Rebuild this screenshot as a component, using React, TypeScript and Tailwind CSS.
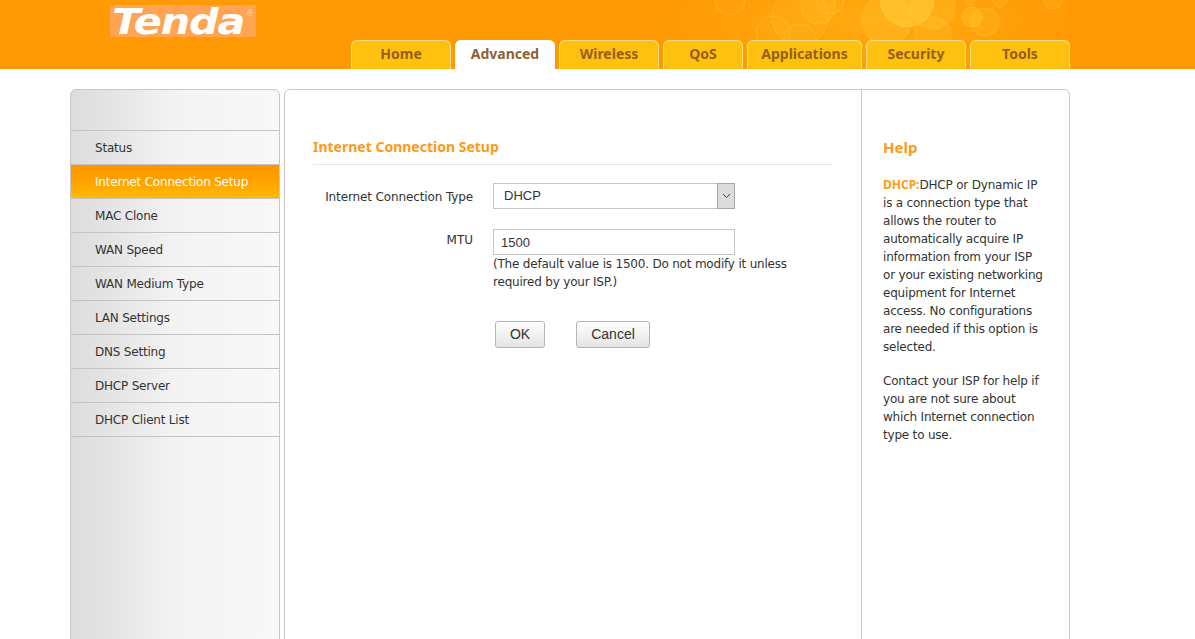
import React from 'react';

const tabs = [
  { label: 'Home', width: 'w-[100px]' },
  { label: 'Advanced', width: 'w-[100px]', active: true },
  { label: 'Wireless', width: 'w-[100px]' },
  { label: 'QoS', width: 'w-[80px]' },
  { label: 'Applications', width: 'w-[115px]' },
  { label: 'Security', width: 'w-[100px]' },
  { label: 'Tools', width: 'w-[100px]' },
];

const menu = [
  'Status',
  'Internet Connection Setup',
  'MAC Clone',
  'WAN Speed',
  'WAN Medium Type',
  'LAN Settings',
  'DNS Setting',
  'DHCP Server',
  'DHCP Client List',
];

// cx, cy, r, fill opacity
const bubbles = [
  [730, 0, 15, 0.06], [773, 33, 17, 0.08], [800, 17, 28, 0.1], [818, 7, 17, 0.14], [800, 40, 16, 0.06],
  [830, 0, 14, 0.1], [887, 20, 25, 0.22], [907, 0, 27, 0.5], [933, 7, 22, 0.2], [933, 35, 18, 0.16],
  [972, 17, 10, 0.3], [985, 22, 14, 0.14], [970, 0, 5, 0.15], [1000, 0, 7, 0.12], [1053, 0, 9, 0.12],
];

const Bubbles = () => (
  <svg className="absolute inset-0 pointer-events-none" width="1195" height="69" viewBox="0 0 1195 69">
    <defs>
      <radialGradient id="glow">
        <stop offset="0" stopColor="#ffb518" stopOpacity="0.6" />
        <stop offset="1" stopColor="#ffb518" stopOpacity="0" />
      </radialGradient>
    </defs>
    <ellipse cx="870" cy="20" rx="210" ry="60" fill="url(#glow)" />
    {bubbles.map(([cx, cy, r, o], i) => (
      <circle key={i} cx={cx} cy={cy} r={r} fill="#ffd23c" fillOpacity={o} stroke="#ffdf70" strokeOpacity="0.25" />
    ))}
  </svg>
);

export default function App() {
  return (
    <div className="h-[639px] overflow-hidden bg-white font-['DejaVu_Sans',sans-serif] text-[12px] tracking-[-0.2px] text-[#333]">
      <header className="relative h-[69px] bg-[#ff9a05]">
        <Bubbles />
        <div className="absolute left-[110px] top-[5px] flex h-[32px] w-[146px] items-center bg-[#ffa452] pl-[2px]">
          <span className="origin-left translate-y-[1px] scale-x-[1.15] font-['DejaVu_Sans',sans-serif] text-[36px] leading-none font-bold tracking-[-1px] text-white italic">
            Tenda
          </span>
          <span className="absolute top-[5px] right-[2px] text-[8px] leading-none tracking-normal text-[#ffd9b0]">®</span>
        </div>
        <nav className="relative flex h-full items-end gap-[4px] pl-[351px]">
          {tabs.map(tab => (
            <a
              key={tab.label}
              className={`flex h-[29px] items-center justify-center rounded-t-[6px] border-x border-t pb-[3px] font-['Noto_Sans',sans-serif] text-[14px] font-bold tracking-normal ${tab.width} ${
                tab.active
                  ? 'border-white bg-white text-[#8f5f36]'
                  : 'border-[#ffdf80] bg-[#fec110] text-[#96601a]'
              }`}
            >
              {tab.label}
            </a>
          ))}
        </nav>
      </header>

      <div className="flex h-[570px] gap-[4px] pt-[20px] pl-[70px]">
        <aside className="h-[600px] w-[210px] overflow-hidden rounded-t-[6px] border border-[#c8c8c8] bg-linear-to-r from-[#dcdcdc] via-[#f3f3f3] to-[#f8f8f8]">
          <div className="h-[40px]" />
          <ul className="border-t border-[#c4c4c4]">
            {menu.map(item => (
              <li
                key={item}
                className={`flex h-[34px] items-center border-b pl-[24px] ${
                  item === 'Internet Connection Setup'
                    ? 'border-[#c4c4c4] bg-linear-to-b from-[#ff9500] via-[#ffa200] to-[#ffbb00] text-white'
                    : 'border-[#c4c4c4] text-[#333]'
                }`}
              >
                {item}
              </li>
            ))}
          </ul>
        </aside>

        <main className="flex h-[600px] w-[786px] overflow-hidden rounded-t-[6px] border border-[#c8c8c8]">
          <section className="w-[576px] pt-[46px] pr-[28px] pl-[28px]">
            <h1 className="h-[29px] border-b border-[#e6e6e6] font-['Noto_Sans',sans-serif] text-[14px] leading-[22px] font-bold tracking-normal text-[#ff9a14]">
              Internet Connection Setup
            </h1>

            <div className="mt-[18px] flex">
              <label className="w-[160px] pt-[7px] text-right leading-[15px] tracking-[-0.12px] whitespace-nowrap">Internet Connection Type</label>
              <div className="relative ml-[20px] h-[26px] w-[242px]">
                <select className="h-full w-full appearance-none border border-[#c4c4c4] bg-white pl-[10px] font-['Liberation_Sans',sans-serif] text-[13px] tracking-normal text-[#333]">
                  <option>DHCP</option>
                </select>
                <span className="absolute top-0 right-0 flex h-[26px] w-[18px] items-center justify-center border border-[#a8a8a8] bg-[#dcdcdc]">
                  <svg width="9" height="6" viewBox="0 0 9 6" fill="none" stroke="#444" strokeWidth="1">
                    <path d="M1 1l3.5 3.5L8 1" />
                  </svg>
                </span>
              </div>
            </div>

            <div className="mt-[20px] flex">
              <label className="w-[160px] pt-[4px] text-right leading-[15px] font-medium tracking-normal">MTU</label>
              <div className="ml-[20px] w-[320px]">
                <input
                  readOnly
                  value="1500"
                  className="h-[26px] w-[242px] border border-[#c4c4c4] pl-[7px] font-['Liberation_Sans',sans-serif] text-[13px] tracking-normal text-[#333] outline-none"
                />
                <p className="leading-[18px]">(The default value is 1500. Do not modify it unless required by your ISP.)</p>
              </div>
            </div>

            <div className="mt-[30px] flex gap-[31px] pl-[182px] font-['Liberation_Sans',sans-serif] text-[14px] tracking-normal text-[#333]">
              <button className="h-[27px] w-[50px] rounded-[3px] border border-[#b4b4b4] bg-linear-to-b from-white to-[#e4e4e4]">OK</button>
              <button className="h-[27px] w-[74px] rounded-[3px] border border-[#b4b4b4] bg-linear-to-b from-white to-[#e4e4e4]">Cancel</button>
            </div>
          </section>

          <section className="w-[208px] border-l border-[#c8c8c8] pt-[45px] pl-[21px] leading-[18px]">
            <h2 className="font-['Noto_Sans',sans-serif] text-[15px] leading-[24px] font-bold tracking-normal text-[#ff9a14]">Help</h2>
            <p className="mt-[17px] w-[164px]">
              <span className="font-['Noto_Sans',sans-serif] font-bold tracking-normal text-[#ff9a14]">DHCP:</span>DHCP or Dynamic IP is a connection type that allows the router to automatically acquire IP information from your ISP or your existing networking equipment for Internet access. No configurations are needed if this option is selected.
            </p>
            <p className="mt-[16px] w-[164px]">Contact your ISP for help if you are not sure about which Internet connection type to use.</p>
          </section>
        </main>
      </div>
    </div>
  );
}
